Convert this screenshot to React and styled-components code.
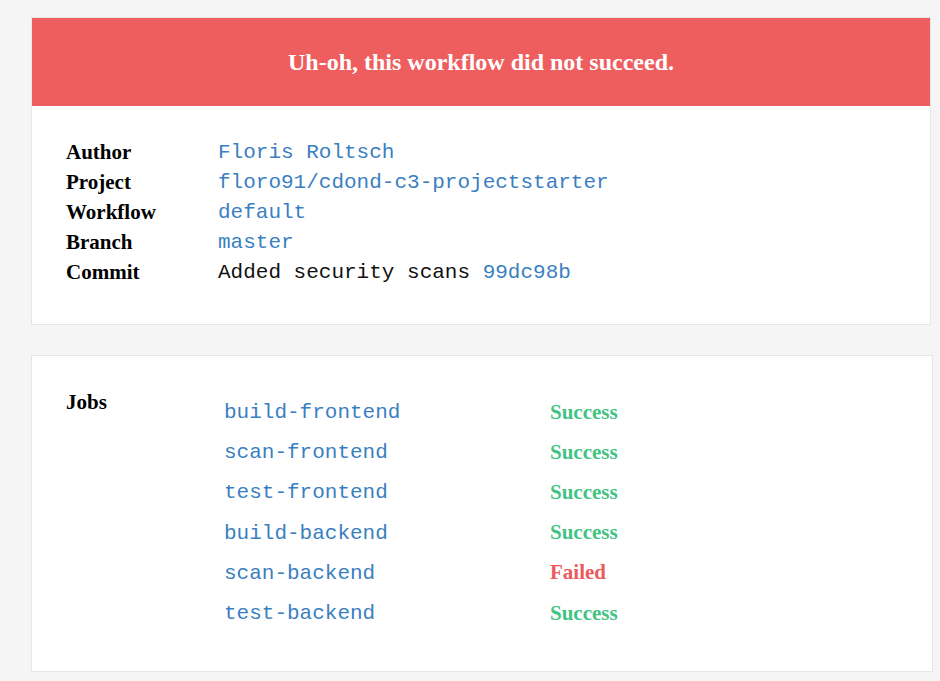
import React from "react";
import styled, { createGlobalStyle } from "styled-components";

const Global = createGlobalStyle`
  html, body { margin: 0; padding: 0; background: #f5f5f5; }
  body { font-family: "Liberation Serif", "Times New Roman", serif; }
`;

const Page = styled.div`
  padding: 17px 0 10px 31px;
  display: flex;
  flex-direction: column;
  align-items: flex-start;
  gap: 30px;
`;

const Card = styled.section`
  box-sizing: border-box;
  width: ${(p) => p.$width}px;
  background: #ffffff;
  border: 1px solid #e6e6e6;
`;

const Banner = styled.div`
  height: 88px;
  background: #ee5e5e;
  color: #ffffff;
  display: flex;
  align-items: center;
  justify-content: center;
  font-family: "Liberation Serif", "Times New Roman", serif;
  font-weight: bold;
  font-size: 24px;
`;

const Details = styled.div`
  display: grid;
  grid-template-columns: 152px 1fr;
  grid-auto-rows: 30px;
  align-items: center;
  padding: 31px 34px 37px;
`;

const Label = styled.div`
  font-family: "Liberation Serif", "Times New Roman", serif;
  font-weight: bold;
  font-size: 21px;
  color: #000;
  line-height: 30px;
`;

const Value = styled.div`
  font-family: "Liberation Mono", "Courier New", monospace;
  font-size: 21px;
  color: ${(p) => (p.$link ? "#3a7fc1" : "#111")};
  line-height: 28px;
  padding-top: 2px;
  white-space: pre;
`;

const Link = styled.span`
  color: #3a7fc1;
`;

const JobsBody = styled.div`
  display: grid;
  grid-template-columns: 158px 1fr;
  align-items: start;
  padding: 31px 34px 38px;
`;

const JobList = styled.div`
  margin-top: 5px;
  display: flex;
  flex-direction: column;
`;

const JobRow = styled.div`
  display: grid;
  grid-template-columns: 326px 1fr;
  align-items: center;
  height: 40.2px;
`;

const JobName = styled.div`
  font-family: "Liberation Mono", "Courier New", monospace;
  font-size: 21px;
  color: #3a7fc1;
  padding-top: 1px;
`;

const Status = styled.div`
  font-family: "Liberation Serif", "Times New Roman", serif;
  font-weight: bold;
  font-size: 21px;
  color: ${(p) => (p.$ok ? "#41c383" : "#ec5a5a")};
`;

const details = [
  ["Author", "Floris Roltsch", true],
  ["Project", "floro91/cdond-c3-projectstarter", true],
  ["Workflow", "default", true],
  ["Branch", "master", true],
];

const jobs = [
  ["build-frontend", true],
  ["scan-frontend", true],
  ["test-frontend", true],
  ["build-backend", true],
  ["scan-backend", false],
  ["test-backend", true],
];

export default function App() {
  return (
    <>
      <Global />
      <Page>
        <Card $width={900}>
          <Banner>Uh-oh, this workflow did not succeed.</Banner>
          <Details>
            {details.map(([k, v, link]) => (
              <React.Fragment key={k}>
                <Label>{k}</Label>
                <Value $link={link}>{v}</Value>
              </React.Fragment>
            ))}
            <Label>Commit</Label>
            <Value>
              Added security scans <Link>99dc98b</Link>
            </Value>
          </Details>
        </Card>
        <Card $width={902}>
          <JobsBody>
            <Label>Jobs</Label>
            <JobList>
              {jobs.map(([name, ok]) => (
                <JobRow key={name}>
                  <JobName>{name}</JobName>
                  <Status $ok={ok}>{ok ? "Success" : "Failed"}</Status>
                </JobRow>
              ))}
            </JobList>
          </JobsBody>
        </Card>
      </Page>
    </>
  );
}
